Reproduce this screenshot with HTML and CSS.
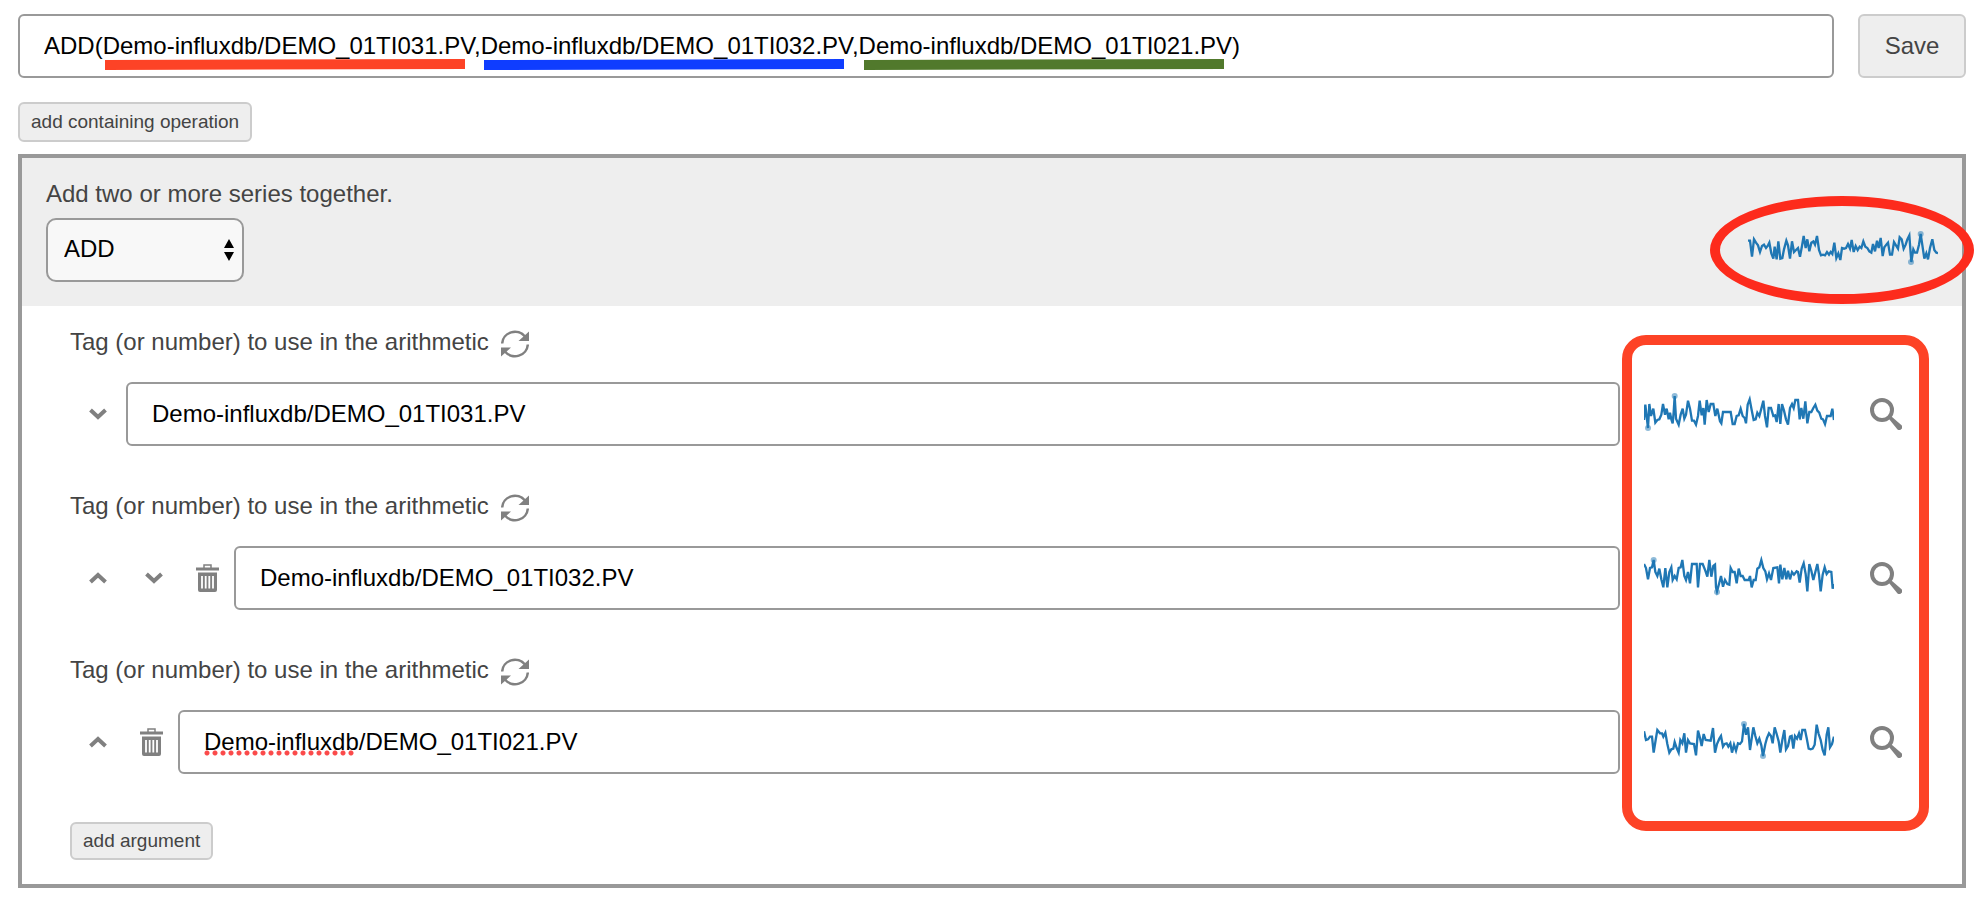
FILE: index.html
```html
<!DOCTYPE html>
<html lang="en">
<head>
  <meta charset="UTF-8">
  <meta name="viewport" content="width=device-width, initial-scale=1.0">
  <title>Expression Editor</title>
  <link rel="stylesheet" href="styles.css">
</head>
<body>
  <!-- Shared icons -->
  <svg class="icon-defs" aria-hidden="true">
    <symbol id="icon-refresh" viewBox="0 0 28 28">
      <path d="M1.2 13.5 A12.8 12.5 0 0 1 24 6.5" fill="none" stroke="currentColor" stroke-width="2.5"/>
      <path d="M28 1.5 V11 H17.5 Z" fill="currentColor"/>
      <path d="M26.8 14.5 A12.8 12.5 0 0 1 4 21.5" fill="none" stroke="currentColor" stroke-width="2.5"/>
      <path d="M0 26.5 V17.5 H10 Z" fill="currentColor"/>
    </symbol>
    <symbol id="icon-down" viewBox="0 0 18 12">
      <path d="M1.5 2 L9 9 L16.5 2" fill="none" stroke="currentColor" stroke-width="4"/>
    </symbol>
    <symbol id="icon-up" viewBox="0 0 18 12">
      <path d="M1.5 10 L9 3 L16.5 10" fill="none" stroke="currentColor" stroke-width="4"/>
    </symbol>
    <symbol id="icon-trash" viewBox="0 0 23 28">
      <path d="M8 4 V1 H15 V4" fill="none" stroke="currentColor" stroke-width="1.5"/>
      <path d="M0 3.5 H23 V6.5 H0 Z M2 8.5 H21 V26 Q21 28 19 28 H4 Q2 28 2 26 Z" fill="currentColor"/>
      <path d="M6 12 V24.5 M9.7 12 V24.5 M13.3 12 V24.5 M17 12 V24.5" stroke="#fff" stroke-width="1.8"/>
    </symbol>
    <symbol id="icon-search" viewBox="0 0 32 32">
      <circle cx="12" cy="12" r="10" fill="none" stroke="currentColor" stroke-width="4"/>
      <path d="M19 21 L21.5 18.5 L31.3 27 A2.8 2.8 0 0 1 27.3 31.2 Z" fill="currentColor"/>
    </symbol>
  </svg>

  <form class="expression">
    <div class="field">
      <input class="text-input" type="text" aria-label="Expression" spellcheck="false" value="ADD(Demo-influxdb/DEMO_01TI031.PV,Demo-influxdb/DEMO_01TI032.PV,Demo-influxdb/DEMO_01TI021.PV)">
      <svg class="underlines" width="1230" height="64" aria-hidden="true">
        <path d="M87 46 L447 45 V55 L87 56 Z" fill="#fd4326"/>
        <path d="M466 46 L826 45 V55 L466 56 Z" fill="#0f3dff"/>
        <path d="M846 46 L1206 45 V55 L846 56 Z" fill="#51792c"/>
      </svg>
    </div>
    <button class="btn btn-save" type="button">Save</button>
  </form>

  <button class="btn btn-small btn-containing" type="button">add containing operation</button>

  <div class="operation">
    <div class="operation-header">
      <div>
        <label class="description" for="operation">Add two or more series together.</label>
        <div class="select-wrap">
          <select id="operation" class="select">
            <option>ADD</option>
          </select>
          <svg class="select-arrows" viewBox="0 0 12 22" aria-hidden="true">
            <path d="M6 0 L11 9 H1 Z M1 13 H11 L6 22 Z"/>
          </svg>
        </div>
      </div>
      <svg class="sparkline" viewBox="12 -30 570 192">
        <polyline points="12,38 18,38 24,86 30,34 36,44 42,52 48,72 54,54 60,50 66,60 72,52 76,44 82,76 88,92 92,56 98,94 103,40 109,92 115,90 120,64 127,38 132,52 138,92 144,40 150,72 156,66 162,60 168,86 174,54 179,24 185,60 190,34 196,70 202,44 208,40 213,50 219,24 225,66 231,82 237,80 243,82 249,72 255,80 260,72 265,78 271,44 277,90 283,76 289,96 294,60 300,62 306,60 312,48 318,62 323,36 329,72 335,54 341,66 347,56 352,60 358,40 364,56 370,60 376,70 382,74 387,48 393,70 399,38 404,60 410,30 416,84 421,58 427,50 432,44 438,80 444,80 450,42 456,52 462,62 467,28 473,34 479,62 485,50 490,34 496,22 502,102 508,64 513,74 519,74 525,50 530,18 536,58 541,92 547,76 552,94 558,60 565,34 571,66 577,74 582,75"/>
        <circle cx="530" cy="18" r="9"/>
        <circle cx="501" cy="102" r="9"/>
      </svg>
      <div class="highlight-ellipse"></div>
    </div>

    <div class="operation-body">
      <div class="argument">
        <div class="argument-label">
          <label for="arg-1">Tag (or number) to use in the arithmetic</label>
          <button class="icon-btn" type="button" aria-label="Switch type"><svg class="icon-refresh"><use href="#icon-refresh"/></svg></button>
        </div>
        <div class="argument-row">
          <div class="controls">
            <button class="icon-btn move" type="button" aria-label="Move down"><svg class="icon-chevron"><use href="#icon-down"/></svg></button>
          </div>
          <div class="field">
            <input class="text-input" id="arg-1" type="text" spellcheck="false" value="Demo-influxdb/DEMO_01TI031.PV">
          </div>
          <svg class="sparkline" viewBox="12 -24 570 192">
            <polyline points="12,90 16,44 20,80 24,114 28,42 33,78 40,56 46,98 52,90 58,88 64,74 69,42 75,74 80,56 86,88 90,68 94,88 98,100 101,66 104,18 108,86 116,104 122,74 128,56 133,86 138,74 144,32 150,56 156,92 162,92 168,104 174,78 179,32 185,76 190,54 194,104 200,30 206,66 212,42 220,42 226,78 232,56 240,94 244,100 249,66 272,66 278,102 284,102 290,78 296,76 302,56 308,78 314,84 318,100 323,44 329,28 335,60 341,90 347,88 352,68 358,78 364,56 370,32 375,78 381,112 386,54 393,54 400,78 405,76 410,96 416,42 421,102 426,42 432,62 438,88 444,104 450,54 456,42 461,54 466,30 474,30 479,88 484,54 490,86 496,34 502,100 508,66 514,66 520,54 526,44 532,62 538,68 544,86 549,88 555,102 561,78 572,78 577,56 582,90"/>
            <circle cx="104" cy="18" r="9"/>
            <circle cx="24" cy="114" r="9"/>
          </svg>
          <button class="icon-btn search" type="button" aria-label="Search"><svg class="icon-search"><use href="#icon-search"/></svg></button>
        </div>
      </div>

      <div class="argument">
        <div class="argument-label">
          <label for="arg-2">Tag (or number) to use in the arithmetic</label>
          <button class="icon-btn" type="button" aria-label="Switch type"><svg class="icon-refresh"><use href="#icon-refresh"/></svg></button>
        </div>
        <div class="argument-row">
          <div class="controls">
            <button class="icon-btn move" type="button" aria-label="Move up"><svg class="icon-chevron"><use href="#icon-up"/></svg></button>
            <button class="icon-btn move" type="button" aria-label="Move down"><svg class="icon-chevron"><use href="#icon-down"/></svg></button>
            <button class="icon-btn remove" type="button" aria-label="Remove"><svg class="icon-trash"><use href="#icon-trash"/></svg></button>
          </div>
          <div class="field">
            <input class="text-input" id="arg-2" type="text" spellcheck="false" value="Demo-influxdb/DEMO_01TI032.PV">
          </div>
          <svg class="sparkline" viewBox="12 -24 570 192">
            <polyline points="12,30 18,42 24,76 30,42 36,40 41,18 46,54 52,66 58,44 64,76 70,100 76,42 82,100 88,54 94,40 98,78 104,66 110,76 116,42 122,40 127,18 133,66 138,78 144,54 150,88 156,30 170,30 174,100 180,30 188,30 196,50 202,68 208,18 214,68 220,36 225,32 228,100 231,112 237,90 243,66 249,98 255,78 262,90 268,92 272,42 278,54 284,54 290,88 296,44 302,66 308,66 314,78 326,78 330,66 335,100 341,78 347,78 352,44 358,40 364,18 370,42 376,52 381,76 387,58 393,78 400,42 412,40 417,88 421,32 427,76 433,42 439,76 444,50 450,76 456,54 462,62 470,52 474,54 479,86 485,44 491,28 497,60 502,112 508,30 514,50 520,78 526,54 532,30 537,62 542,112 548,62 554,40 560,60 566,52 574,54 578,104 582,90"/>
            <circle cx="41" cy="18" r="9"/>
            <circle cx="231" cy="114" r="9"/>
          </svg>
          <button class="icon-btn search" type="button" aria-label="Search"><svg class="icon-search"><use href="#icon-search"/></svg></button>
        </div>
      </div>

      <div class="argument">
        <div class="argument-label">
          <label for="arg-3">Tag (or number) to use in the arithmetic</label>
          <button class="icon-btn" type="button" aria-label="Switch type"><svg class="icon-refresh"><use href="#icon-refresh"/></svg></button>
        </div>
        <div class="argument-row">
          <div class="controls">
            <button class="icon-btn move" type="button" aria-label="Move up"><svg class="icon-chevron"><use href="#icon-up"/></svg></button>
            <button class="icon-btn remove" type="button" aria-label="Remove"><svg class="icon-trash"><use href="#icon-trash"/></svg></button>
          </div>
          <div class="field">
            <input class="text-input" id="arg-3" type="text" spellcheck="false" value="Demo-influxdb/DEMO_01TI021.PV">
            <span class="spelling"></span>
          </div>
          <svg class="sparkline" viewBox="12 -24 570 192">
            <polyline points="12,40 18,66 24,64 30,56 36,56 41,104 47,66 52,36 60,46 66,46 70,56 76,44 82,78 88,104 94,94 100,92 104,72 110,90 116,104 121,66 127,76 133,46 138,104 144,66 150,76 162,78 168,112 174,38 180,60 185,84 191,48 197,66 212,68 219,30 225,104 231,78 238,62 243,54 249,86 254,78 260,76 265,86 271,76 276,104 282,80 288,98 294,76 300,78 306,70 312,18 318,50 324,28 330,96 340,28 346,54 352,76 358,62 364,82 369,114 376,78 381,60 387,46 393,54 398,76 404,28 410,48 416,70 421,104 427,66 433,36 438,94 444,84 450,56 455,54 460,92 465,54 471,62 477,46 482,66 487,36 495,36 500,60 506,92 512,94 518,92 524,80 530,20 536,48 542,66 548,96 554,112 560,50 565,28 570,88 576,78 582,56"/>
            <circle cx="312" cy="18" r="9"/>
            <circle cx="369" cy="114" r="9"/>
          </svg>
          <button class="icon-btn search" type="button" aria-label="Search"><svg class="icon-search"><use href="#icon-search"/></svg></button>
        </div>
      </div>

      <button class="btn btn-small" type="button">add argument</button>
      <div class="highlight-box"></div>
    </div>
  </div>
</body>
</html>
```

FILE: styles.css
```css
* {
  box-sizing: border-box;
}
body {
  margin: 0;
  padding: 14px 10px 24px 18px;
  font-family: Arial, "Liberation Sans", sans-serif;
  font-size: 24px;
  line-height: 24px;
  color: #444;
  background: #fff;
}
svg {
  display: block;
  flex: none;
}
.icon-defs {
  position: absolute;
  width: 0;
  height: 0;
}

/* Controls */
.btn {
  border: 2px solid #ccc;
  border-radius: 6px;
  background: #eee;
  color: #444;
  font-family: inherit;
  font-size: 24px;
  line-height: 24px;
  cursor: pointer;
}
.btn-save {
  width: 108px;
}
.btn-small {
  display: block;
  padding: 6px 11px;
  font-size: 19px;
  line-height: 22px;
}
.btn-containing {
  margin: 24px 0 12px;
  padding: 7px 11px;
}
.field {
  position: relative;
  flex: 1;
  min-width: 0;
}
.text-input {
  display: block;
  width: 100%;
  height: 64px;
  padding: 0 24px;
  border: 2px solid #999;
  border-radius: 6px;
  background: #fff;
  color: #000;
  font-family: inherit;
  font-size: 24px;
}
.icon-btn {
  display: flex;
  align-items: center;
  justify-content: center;
  padding: 0;
  border: none;
  background: none;
  color: #808080;
  cursor: pointer;
}

/* Expression bar */
.expression {
  display: flex;
  gap: 24px;
}
.underlines {
  position: absolute;
  top: 0;
  left: 0;
  pointer-events: none;
}

/* Operation panel */
.operation {
  border: 4px solid #999;
}
.operation-header {
  position: relative;
  display: flex;
  align-items: flex-end;
  justify-content: space-between;
  padding: 24px;
  background: #eee;
}
.description {
  display: block;
  margin-bottom: 12px;
}
.select-wrap {
  position: relative;
  width: 198px;
}
.select {
  appearance: none;
  display: block;
  width: 100%;
  height: 64px;
  padding: 0 32px 4px 16px;
  border: 2px solid #999;
  border-radius: 10px;
  background: #f8f8f8;
  color: #000;
  font-family: inherit;
  font-size: 24px;
}
.select-arrows {
  position: absolute;
  top: 21px;
  right: 9px;
  width: 12px;
  height: 22px;
  fill: #000;
  pointer-events: none;
}
.sparkline {
  width: 190px;
  height: 64px;
}
.sparkline polyline {
  fill: none;
  stroke: #1f77b4;
  stroke-width: 7;
}
.sparkline circle {
  fill: #1f77b4;
  fill-opacity: 0.5;
}

/* Arguments */
.operation-body {
  position: relative;
  padding: 24px 60px 24px 48px;
}
.argument {
  margin-bottom: 48px;
}
.argument-label {
  display: flex;
  align-items: flex-start;
  gap: 12px;
  margin-bottom: 24px;
}
.argument-row {
  display: flex;
  align-items: center;
}
.controls {
  display: flex;
}
.move {
  width: 56px;
  height: 64px;
}
.remove {
  width: 52px;
  height: 64px;
  padding-right: 2px;
}
.argument-row .sparkline {
  margin: 0 36px 0 24px;
}
.icon-refresh {
  width: 28px;
  height: 28px;
}
.icon-chevron {
  width: 18px;
  height: 12px;
}
.icon-trash {
  width: 23px;
  height: 28px;
}
.icon-search {
  width: 32px;
  height: 32px;
}
.spelling {
  position: absolute;
  top: 40px;
  left: 26px;
  width: 152px;
  height: 6px;
  background: radial-gradient(circle at 3px 3px, #fb4a4a 2px, rgba(251, 74, 74, 0) 3px) 0 0 / 8px 6px repeat-x;
  pointer-events: none;
}

/* Highlights */
.highlight-ellipse {
  position: absolute;
  top: 38px;
  right: -12px;
  width: 264px;
  height: 108px;
  border: 10px solid #fd2b1c;
  border-radius: 50%;
  pointer-events: none;
}
.highlight-box {
  position: absolute;
  top: 29px;
  right: 33px;
  bottom: 53px;
  width: 307px;
  border: 10px solid #fd4326;
  border-radius: 24px;
  pointer-events: none;
}
```
